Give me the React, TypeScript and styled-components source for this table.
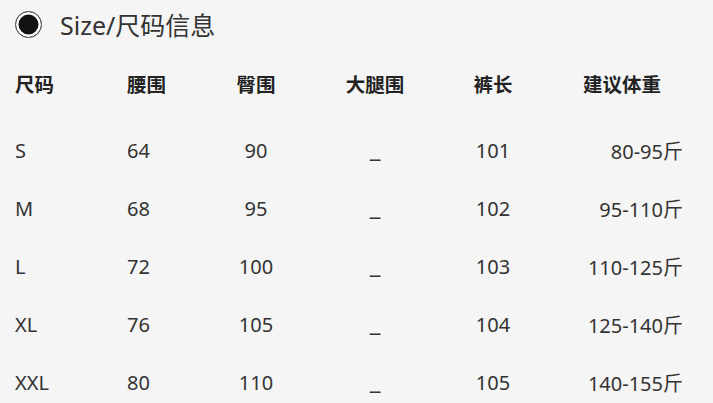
import React from 'react';
import styled, { createGlobalStyle } from 'styled-components';

const GlobalStyle = createGlobalStyle`
  html, body {
    margin: 0;
    padding: 0;
    background: #f5f5f5;
  }
  body {
    font-family: "Noto Sans", "Noto Sans CJK SC", sans-serif;
    color: #333;
  }
`;

const Page = styled.div`
  width: 713px;
  height: 403px;
  overflow: hidden;
  background: #f5f5f5;
  padding-left: 15px;
  box-sizing: border-box;
`;

const Title = styled.div`
  display: flex;
  align-items: center;
  gap: 18px;
  height: 48px;
  font-size: 25px;
  color: #333;
`;

const Radio = styled.span`
  width: 25px;
  height: 25px;
  border-radius: 50%;
  border: 1.5px solid #555;
  background: #111;
  box-shadow: inset 0 0 0 2.5px #fff;
  box-sizing: content-box;
`;

const Table = styled.div`
  display: grid;
  grid-template-columns: 112px 73px 112px 126px 110px 135px;
  grid-template-rows: 58px 9px;
  grid-auto-rows: 58px;
  margin-top: 6px;
`;

const Cell = styled.div<{ $align?: 'left' | 'center' | 'right'; $head?: boolean; $padRight?: number }>`
  display: flex;
  align-items: center;
  justify-content: ${({ $align }) =>
    $align === 'center' ? 'center' : $align === 'right' ? 'flex-end' : 'flex-start'};
  padding-right: ${({ $padRight }) => $padRight ?? 0}px;
  font-size: ${({ $head }) => ($head ? '19.5px' : '20px')};
  font-weight: ${({ $head }) => ($head ? 700 : 400)};
  color: ${({ $head }) => ($head ? '#222' : '#333')};
  white-space: nowrap;
`;

const HeadSpacer = styled.div`
  grid-column: 1 / -1;
`;

const Dash = styled.span`
  font-size: 24px;
  transform: translateY(-3px);
`;

const aligns: Array<'left' | 'center' | 'right'> = ['left', 'left', 'center', 'center', 'center', 'right'];

const headers = ['尺码', '腰围', '臀围', '大腿围', '裤长', '建议体重'];

const rows = [
  ['S', '64', '90', '_', '101', '80-95斤'],
  ['M', '68', '95', '_', '102', '95-110斤'],
  ['L', '72', '100', '_', '103', '110-125斤'],
  ['XL', '76', '105', '_', '104', '125-140斤'],
  ['XXL', '80', '110', '_', '105', '140-155斤'],
];

const App: React.FC = () => (
  <Page>
    <GlobalStyle />
    <Title>
      <Radio />
      Size/尺码信息
    </Title>
    <Table>
      {headers.map((h, i) => (
        <Cell key={h} $head $align={i === 5 ? 'right' : aligns[i]} $padRight={i === 5 ? 22 : 0}>
          {h}
        </Cell>
      ))}
      <HeadSpacer />
      {rows.map((row) =>
        row.map((v, i) => (
          <Cell key={`${row[0]}-${i}`} $align={aligns[i]}>
            {i === 3 ? <Dash>{v}</Dash> : v}
          </Cell>
        ))
      )}
    </Table>
  </Page>
);

export default App;
